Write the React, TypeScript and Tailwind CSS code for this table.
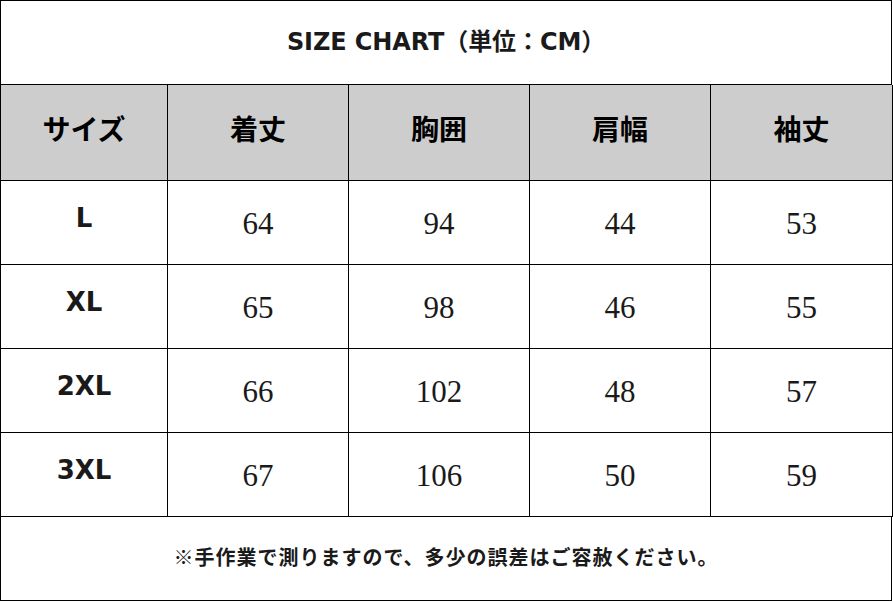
const sans = "font-['DejaVu_Sans','Noto_Sans_CJK_JP',sans-serif]"
const cjk = "font-['Noto_Sans_CJK_JP',sans-serif]"

const headers = ["サイズ", "着丈", "胸囲", "肩幅", "袖丈"]

const rows = [
  { size: "L", values: [64, 94, 44, 53] },
  { size: "XL", values: [65, 98, 46, 55] },
  { size: "2XL", values: [66, 102, 48, 57] },
  { size: "3XL", values: [67, 106, 50, 59] },
]

export default function App() {
  return (
    <div className="w-[893px] h-[602px] bg-white text-[#1a1a1a]">
      <div className="w-[892px] border-l border-t border-black">
        {/* title */}
        <div className="h-[84px] border-r border-b border-black flex items-center justify-center pb-[2px]">
          <span className={`${sans} font-bold text-[24px] tracking-[-0.1px]`}>
            SIZE CHART（単位：CM）
          </span>
        </div>

        {/* header row */}
        <div className="grid grid-cols-[167px_181px_181px_181px_182px] h-[96px] bg-[#cdcdcd]">
          {headers.map((h) => (
            <div
              key={h}
              className={`${cjk} font-bold text-[28px] text-black border-r border-b border-black flex items-center justify-center pb-[10px]`}
            >
              {h}
            </div>
          ))}
        </div>

        {/* data rows */}
        {rows.map((r) => (
          <div key={r.size} className="grid grid-cols-[167px_181px_181px_181px_182px] h-[84px]">
            <div
              className={`${sans} font-bold text-[26px] border-r border-b border-black flex items-center justify-center pb-[8px]`}
            >
              {r.size}
            </div>
            {r.values.map((v, i) => (
              <div
                key={i}
                className="font-['Liberation_Serif',serif] text-[31px] border-r border-b border-black flex items-center justify-center pt-[3px]"
              >
                {v}
              </div>
            ))}
          </div>
        ))}

        {/* note */}
        <div className="h-[84px] border-r border-b border-black flex items-center justify-center pb-[4px]">
          <span className={`${cjk} font-bold text-[20px] tracking-[1px]`}>
            ※手作業で測りますので、多少の誤差はご容赦ください。
          </span>
        </div>
      </div>
    </div>
  )
}
